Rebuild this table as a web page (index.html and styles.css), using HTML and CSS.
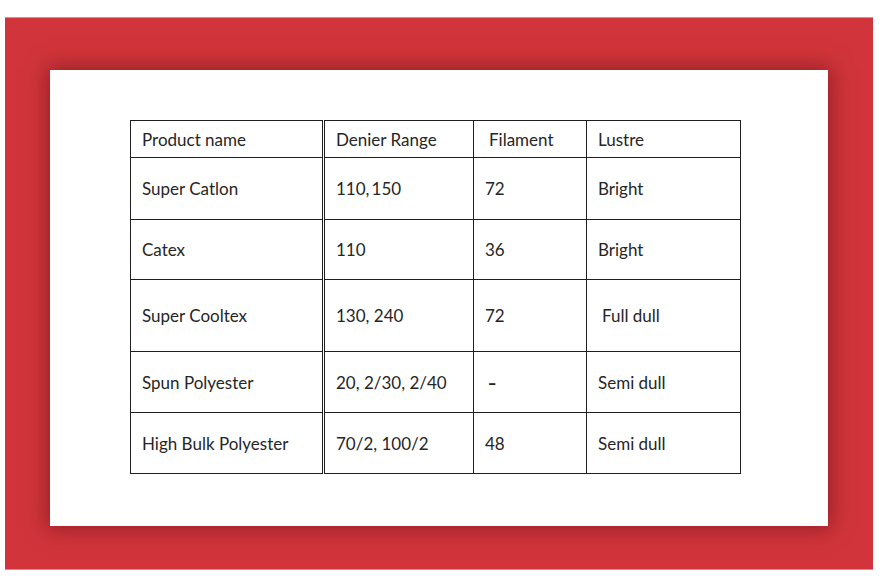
FILE: index.html
```html
<!DOCTYPE html>
<html lang="en">
<head>
<meta charset="utf-8">
<title>Products</title>
<link rel="stylesheet" href="styles.css">
</head>
<body>
<div class="page">
  <div class="frame">
    <div class="panel">
      <table class="products">
        <colgroup>
          <col class="c1"><col class="c2"><col class="c3"><col class="c4">
        </colgroup>
        <tr class="r-head">
          <td class="name">Product name</td>
          <td>Denier Range</td>
          <td class="pad-extra">Filament</td>
          <td>Lustre</td>
        </tr>
        <tr class="r1">
          <td class="name">Super Catlon</td>
          <td>110,&#8201;150</td>
          <td>72</td>
          <td>Bright</td>
        </tr>
        <tr class="r2">
          <td class="name">Catex</td>
          <td>110</td>
          <td>36</td>
          <td>Bright</td>
        </tr>
        <tr class="r3">
          <td class="name">Super Cooltex</td>
          <td>130, 240</td>
          <td>72</td>
          <td class="pad-extra">Full dull</td>
        </tr>
        <tr class="r4">
          <td class="name">Spun Polyester</td>
          <td>20, 2/30, 2/40</td>
          <td class="pad-extra"><span class="dash">-</span></td>
          <td>Semi dull</td>
        </tr>
        <tr class="r5">
          <td class="name">High Bulk Polyester</td>
          <td>70/2, 100/2</td>
          <td>48</td>
          <td>Semi dull</td>
        </tr>
      </table>
    </div>
  </div>
</div>
</body>
</html>
```
FILE: styles.css
```css
html, body {
  margin: 0;
  padding: 0;
  background: #ffffff;
}
.page {
  padding: 17px 0 0 5px;
}
.frame {
  width: 868px;
  height: 553px;
  background: #d1353b;
  box-sizing: border-box;
  padding: 53px 0 0 45px;
  border-top: 1px solid #e08a8d;
  border-bottom: 1px solid #e08a8d;
}
.panel {
  width: 778px;
  height: 456px;
  margin-top: -1px;
  background: #ffffff;
  box-sizing: border-box;
  padding: 50px 0 0 80px;
  box-shadow: 0 0 20px 3px rgba(90, 10, 15, 0.5);
}
.products {
  border-collapse: collapse;
  table-layout: fixed;
  width: 610px;
  font-family: "Lato", "Liberation Sans", sans-serif;
  font-size: 17px;
  color: #262626;
}
.c1 { width: 193px; }
.c2 { width: 150px; }
.c3 { width: 113px; }
.c4 { width: 154px; }
.products td {
  border: 1px solid #1f1f1f;
  padding: 0 0 0 11px;
  vertical-align: middle;
  white-space: nowrap;
}
.products td.name {
  border-right: 3px double #1f1f1f;
}
.products td.pad-extra {
  padding-left: 15px;
}
.dash {
  display: inline-block;
  transform: scaleX(1.4);
  font-weight: 700;
}
.r-head { height: 37px; }
.r1 { height: 62px; }
.r2 { height: 60px; }
.r3 { height: 72px; }
.r4 { height: 61px; }
.r5 { height: 61px; }
```
